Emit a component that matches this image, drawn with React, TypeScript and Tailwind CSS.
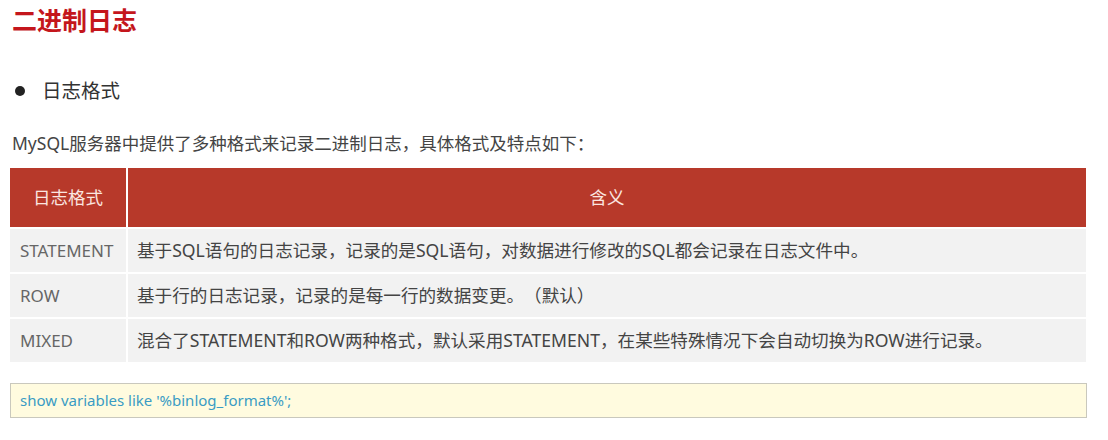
import React from "react";

const font = { fontFamily: '"Noto Sans", "Noto Sans CJK SC", sans-serif' };

const rows = [
  ["STATEMENT", "基于SQL语句的日志记录，记录的是SQL语句，对数据进行修改的SQL都会记录在日志文件中。"],
  ["ROW", "基于行的日志记录，记录的是每一行的数据变更。（默认）"],
  ["MIXED", "混合了STATEMENT和ROW两种格式，默认采用STATEMENT，在某些特殊情况下会自动切换为ROW进行记录。"],
];

export default function App() {
  return (
    <div className="w-[1108px] h-[440px] bg-white overflow-hidden [text-spacing-trim:space-all]" style={font}>
      <h1 className="h-[40px] leading-[40px] pl-[12px] text-[25px] font-bold text-[#c4161c]">二进制日志</h1>
      <div className="mt-[36px] h-[30px] flex items-center pl-[15px]">
        <span className="w-[10px] h-[10px] rounded-full bg-[#222]" />
        <span className="ml-[17px] text-[19.5px] leading-[30px] text-[#333]">日志格式</span>
      </div>
      <p className="mt-[24px] pl-[12px] h-[26px] leading-[26px] text-[17.5px] text-[#444]">
        MySQL服务器中提供了多种格式来记录二进制日志，具体格式及特点如下：
      </p>
      <div className="mt-[12px] ml-[10px] w-[1076px] grid grid-cols-[116px_1fr] gap-x-[2px] gap-y-[2px] bg-white">
        <div className="h-[59px] bg-[#b7392a] flex items-center justify-center text-[17.5px] text-[#fbe6e0]">日志格式</div>
        <div className="h-[59px] bg-[#b7392a] flex items-center justify-center text-[17.5px] text-[#fbe6e0]">含义</div>
        {rows.map(([k, v]) => (
          <React.Fragment key={k}>
            <div className="h-[43px] bg-[#f2f2f2] flex items-center pl-[10px] text-[17px] text-[#666]">{k}</div>
            <div className="h-[43px] bg-[#f2f2f2] flex items-center pl-[9px] text-[17.6px] text-[#444]">{v}</div>
          </React.Fragment>
        ))}
      </div>
      <div className="mt-[21px] ml-[10px] w-[1077px] h-[35px] border border-[#c9c8bd] bg-[#fffbdf] flex items-center pl-[9px] text-[15px] text-[#3a9cc4]">
        show variables like '%binlog_format%';
      </div>
    </div>
  );
}
